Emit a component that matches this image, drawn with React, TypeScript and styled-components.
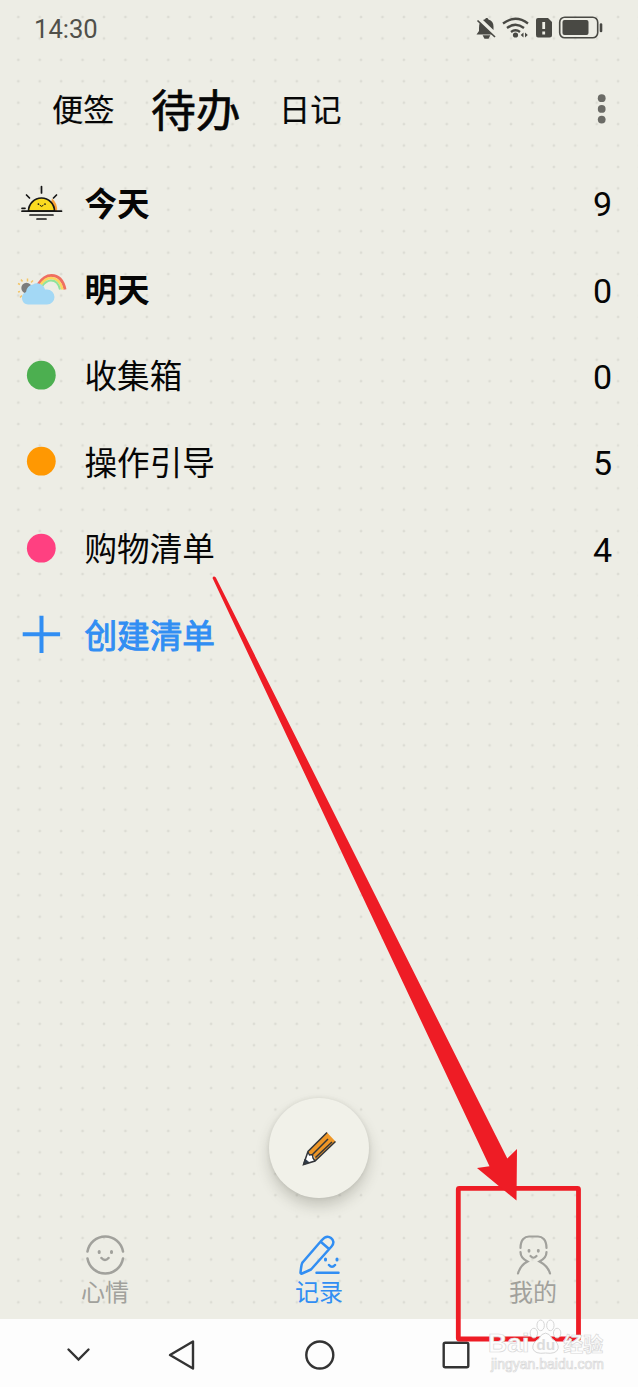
import React from "react";
import styled, { createGlobalStyle, css } from "styled-components";

const Global = createGlobalStyle`
  * { box-sizing: border-box; }
  body { margin: 0; background: #edede5; font-family: "Noto Sans CJK SC", "Noto Sans", sans-serif; }
`;

const Screen = styled.div`
  position: relative;
  width: 638px;
  height: 1387px;
  overflow: hidden;
  display: flex;
  flex-direction: column;
  background-color: #edede5;
  background-image: radial-gradient(circle at center, #dcdcd4 0, #dcdcd4 0.8px, transparent 1.8px);
  background-size: 21.43px 21.43px;
  background-position: 7.6px 6.3px;
`;

const StatusBar = styled.header`
  flex: none;
  height: 56px;
  padding: 0 35px 0 34px;
  display: flex;
  align-items: center;
  justify-content: space-between;
`;

const Clock = styled.span`
  font-family: Roboto, sans-serif;
  font-size: 25.6px;
  line-height: 30px;
  color: #50504a;
  padding-top: 2px;
`;

const StatusIcons = styled.div`
  display: flex;
  align-items: center;
  gap: 6px;
`;

const Tabs = styled.nav`
  flex: none;
  height: 105px;
  padding: 0 26px 2px 52px;
  display: flex;
  align-items: center;
  color: #060606;
`;

const Tab = styled.span<{ $active?: boolean }>`
  font-size: ${(p) => (p.$active ? 44.8 : 31.2)}px;
  font-weight: 400;
  -webkit-text-stroke: ${(p) => (p.$active ? 0.6 : 0.2)}px #060606;
  line-height: 60px;
  width: ${(p) => (p.$active ? 128 : 99)}px;
  white-space: nowrap;
`;

const More = styled.svg`
  margin-left: auto;
`;

const List = styled.main`
  flex: none;
  display: flex;
  flex-direction: column;
`;

const Row = styled.div<{ $strong?: boolean; $accent?: boolean }>`
  height: 86.4px;
  padding: 0 26px 2px 17px;
  display: flex;
  align-items: center;
  font-size: 32.6px;
  line-height: 44px;
  color: ${(p) => (p.$accent ? "#318ef3" : "#060606")};
  font-weight: ${(p) => (p.$strong ? 700 : 400)};
  -webkit-text-stroke: ${(p) => (p.$accent ? "1px #318ef3" : "0")};
`;

const RowIcon = styled.svg`
  flex: none;
  width: 50px;
  height: 40px;
  margin-right: 17.5px;
`;

const RowTitle = styled.span`
  flex: 1;
  padding-bottom: 3px;
`;

const RowCount = styled.span`
  font-family: Roboto, sans-serif;
  font-size: 34px;
  font-weight: 400;
  width: 19px;
  display: flex;
  justify-content: center;
  padding-top: 2px;
`;

const Spacer = styled.div`
  flex: 1;
`;

const Fab = styled.button`
  flex: none;
  align-self: center;
  width: 100px;
  height: 100px;
  margin-bottom: 21px;
  padding: 0;
  border: 0;
  border-radius: 50%;
  background: #f1f1e9;
  box-shadow: 0 8px 14px rgba(60, 60, 45, 0.22), 0 0 4px rgba(60, 60, 45, 0.1);
  display: flex;
  align-items: center;
  justify-content: center;
`;

const BottomTabs = styled.nav`
  flex: none;
  height: 100px;
  padding: 12px 0 0;
  display: grid;
  grid-template-columns: 210px 218px 210px;
`;

const BottomTab = styled.div<{ $active?: boolean }>`
  display: flex;
  flex-direction: column;
  align-items: center;
  font-size: 24px;
  line-height: 32px;
  color: ${(p) => (p.$active ? "#318ef3" : "#a1a19c")};
  svg { margin-bottom: -2px; }
`;

const SystemNav = styled.footer`
  flex: none;
  height: 68px;
  padding: 3px 0 0 60px;
  background: #fdfdfd;
  display: flex;
  align-items: center;
`;

const NavKey = styled.svg<{ $gap: number }>`
  margin-right: ${(p) => p.$gap}px;
`;

const layer = css`
  position: absolute;
  pointer-events: none;
`;

const Annotation = styled.svg`
  ${layer}
  left: 0;
  top: 0;
`;

const Watermark = styled.div`
  ${layer}
  left: 488px;
  top: 1317px;
  width: 118px;
  font-family: "Liberation Sans", "Noto Sans CJK SC", sans-serif;
  font-weight: 700;
  color: #fdfdfd;
  -webkit-text-stroke: 0.7px #d8d8d8;
`;

const Brand = styled.div`
  display: flex;
  align-items: flex-end;
  height: 39px;
  font-size: 26.5px;
  line-height: 25px;
`;

const Paw = styled.svg`
  flex: none;
  margin-right: 1px;
`;

const BrandCn = styled.span`
  font-family: "Noto Sans CJK SC", sans-serif;
  font-size: 20px;
  line-height: 25px;
  white-space: nowrap;
`;

const Site = styled.div`
  padding-left: 3px;
  font-size: 14px;
  line-height: 16px;
  font-weight: 400;
  white-space: nowrap;
`;

const SunIcon = () => (
  <RowIcon viewBox="17 182.500 50 40" fill="none" stroke="#161616" strokeWidth="1.7" strokeLinecap="round">
    <path d="M52 198q6 5 5 13h-8z" fill="#f9a13a" stroke="none" />
    <path d="M28.500 210.500a13 13 0 0 1 26 0z" fill="#fbdb20" />
    <path d="M22 210.700h39.500M30 214.500h23M37 218.500h9M22 207.800h3M41.500 186v6.500M26.500 194.500l3 3M56.500 194.500l-3 3" />
    <path d="M40 205q1.600 2 3.200 0" strokeWidth="1" />
    <path d="M38.400 203.600h.01M45 203.600h.01" />
  </RowIcon>
);

const RainbowIcon = () => (
  <RowIcon viewBox="17 269.500 50 40" fill="none">
    <path d="M20 284l-2-1M20 291l-2 .5M22 295l-2 2M27.500 281v-3M31 282l2-2M22.500 281l-1.500-2" stroke="#f3c568" strokeWidth="1.500" />
    <circle cx="26.500" cy="287.500" r="5.200" fill="#7c7c7c" />
    <path d="M38 284Q44 275 51.500 275Q62 275 65 289" stroke="#ef6f61" strokeWidth="3" />
    <path d="M40 285Q45 277.500 51 277.500Q60 278 62.500 289" stroke="#fbd65f" strokeWidth="2.500" />
    <path d="M42 286Q46 280 51 280Q58 280 60 289" stroke="#90e39a" strokeWidth="2" />
    <path d="M28 304a6.500 6.500 0 0 1-2-12.500a8 8 0 0 1 7-7.500a8 8 0 0 1 12 5h2a7.500 7.500 0 0 1 0 15z" fill="#a3d8f5" />
  </RowIcon>
);

const ColorDot = ({ color }: { color: string }) => (
  <RowIcon viewBox="0 0 50 40">
    <circle cx="24.300" cy="19.200" r="14.400" fill={color} />
  </RowIcon>
);

const PlusIcon = () => (
  <RowIcon viewBox="0 0 50 40">
    <path d="M5.700 19.300h37.400M24.500.700v37.400" stroke="#318ef3" strokeWidth="4" />
  </RowIcon>
);

const items = [
  { icon: <SunIcon />, title: "今天", count: 9, strong: true },
  { icon: <RainbowIcon />, title: "明天", count: 0, strong: true },
  { icon: <ColorDot color="#4caf50" />, title: "收集箱", count: 0 },
  { icon: <ColorDot color="#ff9802" />, title: "操作引导", count: 5 },
  { icon: <ColorDot color="#ff4081" />, title: "购物清单", count: 4 },
];

export default function App() {
  return (
    <>
      <Global />
      <Screen>
        <StatusBar>
          <Clock>14:30</Clock>
          <StatusIcons>
            <svg width="127" height="26" viewBox="476 15 127 26" fill="none">
              <path d="M480 22.500q-1 2-1 5.500v3l-2.500 3.500H492zM483 20l10.500 10v-3.500q0-5.500-5-7l-1-1.500h-1.500l-1 1.300z" fill="#494944" />
              <path d="M484 36h5l-1 2h-3zM477.500 20.500L495 37" fill="#494944" stroke="#494944" strokeWidth="1.700" />
              <path d="M503 23.500q12.500-9.500 25 0M507 28q8.500-6.500 17 0M511 32q4.500-3.500 9 0" stroke="#494944" strokeWidth="2.300" />
              <circle cx="515.500" cy="35" r="2.600" fill="#494944" />
              <path d="M523.500 32.500v5l-2.800-2.500zM525 32.500v5l2.800-2.500z" fill="#494944" />
              <path d="M538 18h10l4 4v13q0 2.500-2.500 2.500h-11.500q-2 0-2-2.500v-15q0-2 2-2z" fill="#494944" />
              <path d="M543.700 22v7M543.700 31.500v3" stroke="#edede5" strokeWidth="2.800" />
              <rect x="559.700" y="17.200" width="38" height="20.600" rx="5" stroke="#494944" strokeWidth="1.600" />
              <rect x="562.500" y="20" width="26" height="15" rx="2" fill="#494944" />
              <path d="M601 24.500v6.500" stroke="#494944" strokeWidth="2.600" strokeLinecap="round" />
            </svg>
          </StatusIcons>
        </StatusBar>
        <Tabs>
          <Tab>便签</Tab>
          <Tab $active>待办</Tab>
          <Tab>日记</Tab>
          <More width="20" height="36" viewBox="0 0 20 36" fill="#6b6b66">
            <circle cx="9.700" cy="8.200" r="3.900" />
            <circle cx="9.700" cy="18.900" r="3.900" />
            <circle cx="9.700" cy="29.600" r="3.900" />
          </More>
        </Tabs>
        <List>
          {items.map((item) => (
            <Row key={item.title} $strong={item.strong}>
              {item.icon}
              <RowTitle>{item.title}</RowTitle>
              <RowCount>{item.count}</RowCount>
            </Row>
          ))}
          <Row $accent>
            <PlusIcon />
            <RowTitle>创建清单</RowTitle>
          </Row>
        </List>
        <Spacer />
        <Fab aria-label="edit">
          <svg width="38" height="38" viewBox="300 1128 38 38" fill="none">
            <path d="M327 1131.500L308 1150.500L303.500 1163.500L315 1159.500L335.500 1140.500z" fill="#ee9626" />
            <path d="M308 1151l-4.500 12.500L315 1160l-1-5-3-1z" fill="#fff" />
            <path d="M305 1158l-1.500 5.500 5.500-2z" fill="#2f3c4b" stroke="#2f3c4b" />
            <path d="M327 1131.500L308 1150.500L303.500 1163.500L315 1160L335.500 1140.500M308 1151l1.500 3 3-.5 .5 3.500 2 3M312 1154L328 1138M315.500 1156.500L332 1141" stroke="#33363a" strokeWidth="1.500" />
          </svg>
        </Fab>
        <BottomTabs>
          <BottomTab>
            <svg width="46" height="46" viewBox="82 1231.500 46 46" fill="none" stroke="#a1a19c" strokeWidth="2.500" strokeLinecap="round">
              <path d="M87.500 1252a18 18 0 0 1 35.500 0M87.500 1259a18 18 0 0 0 35.500 0M101.500 1258.500q3.500 4 7 0" />
              <path d="M99.200 1252v1M111.500 1252v1" strokeWidth="3" />
            </svg>
            心情
          </BottomTab>
          <BottomTab $active>
            <svg width="46" height="46" viewBox="296.500 1231.500 46 46" fill="none" stroke="#318ef3" strokeWidth="2.500" strokeLinecap="round" strokeLinejoin="round">
              <path d="M322 1241l-19 22q-1 1-2 10 0 1.500 1.500 1l9-4 20.500-23q4-5-.5-8.500-4.500-3.500-9.500 2.500zM321.500 1242.500l7.500 6.500M317 1273.300h22M329.500 1265.500q3 3.500 6 0" />
              <path d="M326 1259.500v1M337.500 1259.500v1" strokeWidth="3" />
            </svg>
            记录
          </BottomTab>
          <BottomTab>
            <svg width="46" height="46" viewBox="510 1231.500 46 46" fill="none" stroke="#a1a19c" strokeWidth="2.200" strokeLinecap="round">
              <path d="M520.500 1248.500C520.500 1240 525 1237 529 1237h9C542 1237 546.500 1240 546.500 1248.500M520.500 1252.500C520.500 1257 523.500 1260 527.500 1262C522 1265 519.500 1268.500 518 1274M546.500 1252.500C546.500 1257 543.500 1260 539.500 1262C545 1265 548.500 1268.500 550 1274M530.500 1256.500q3 3.500 6 0" />
              <path d="M529 1250.800v1M538.300 1250.800v1" strokeWidth="2.800" />
            </svg>
            我的
          </BottomTab>
        </BottomTabs>
        <SystemNav>
          <NavKey $gap={68} width="36" height="36" viewBox="60 1337 36 36" fill="none" stroke="#333" strokeWidth="2.400" strokeLinecap="round">
            <path d="M68.500 1349.500L78.500 1359.500L88.500 1349.500" />
          </NavKey>
          <NavKey $gap={101.5} width="36" height="36" viewBox="164 1337 36 36" fill="none" stroke="#333" strokeWidth="2.400" strokeLinejoin="round">
            <path d="M193 1341.500v27l-23-13.500z" />
          </NavKey>
          <NavKey $gap={100.5} width="36" height="36" viewBox="301.500 1337 36 36" fill="none" stroke="#333" strokeWidth="2.400">
            <circle cx="319.300" cy="1355" r="13.500" />
          </NavKey>
          <NavKey $gap={0} width="36" height="36" viewBox="438 1337 36 36" fill="none" stroke="#333" strokeWidth="2.400">
            <rect x="443.700" y="1342.700" width="24.600" height="24.600" rx="1.500" />
          </NavKey>
        </SystemNav>
        <Annotation width="638" height="1387" viewBox="0 0 638 1387">
          <rect x="458.300" y="1188.300" width="120.200" height="150.700" rx="1" fill="none" stroke="#ee1c25" strokeWidth="4.800" />
          <path d="M212.500 578Q213.500 575.500 215.800 577.500L507.300 1158.500L517 1149L516.500 1200.500L477 1168L489.500 1166.300z" fill="#ee1c25" />
        </Annotation>
        <Watermark>
          <Brand>
            Bai
            <Paw width="33" height="38" viewBox="-1 0 34 38" fill="#fdfdfd" stroke="#d4d4d4" strokeWidth="1">
              <ellipse cx="4" cy="15" rx="3.800" ry="5" />
              <ellipse cx="11" cy="7" rx="3.800" ry="5.500" />
              <ellipse cx="21" cy="7" rx="3.800" ry="5.500" />
              <ellipse cx="28" cy="15" rx="3.800" ry="5" />
              <path d="M16 15q4 0 7 6 7 4 6 10-2 6-13 4.500Q5 37 3 31q-1-6 6-10 3-6 7-6z" />
              <text x="6.500" y="32" fontSize="16" fill="#dcdcdc" stroke="none">du</text>
            </Paw>
            <BrandCn>经验</BrandCn>
          </Brand>
          <Site>jingyan.baidu.com</Site>
        </Watermark>
      </Screen>
    </>
  );
}
